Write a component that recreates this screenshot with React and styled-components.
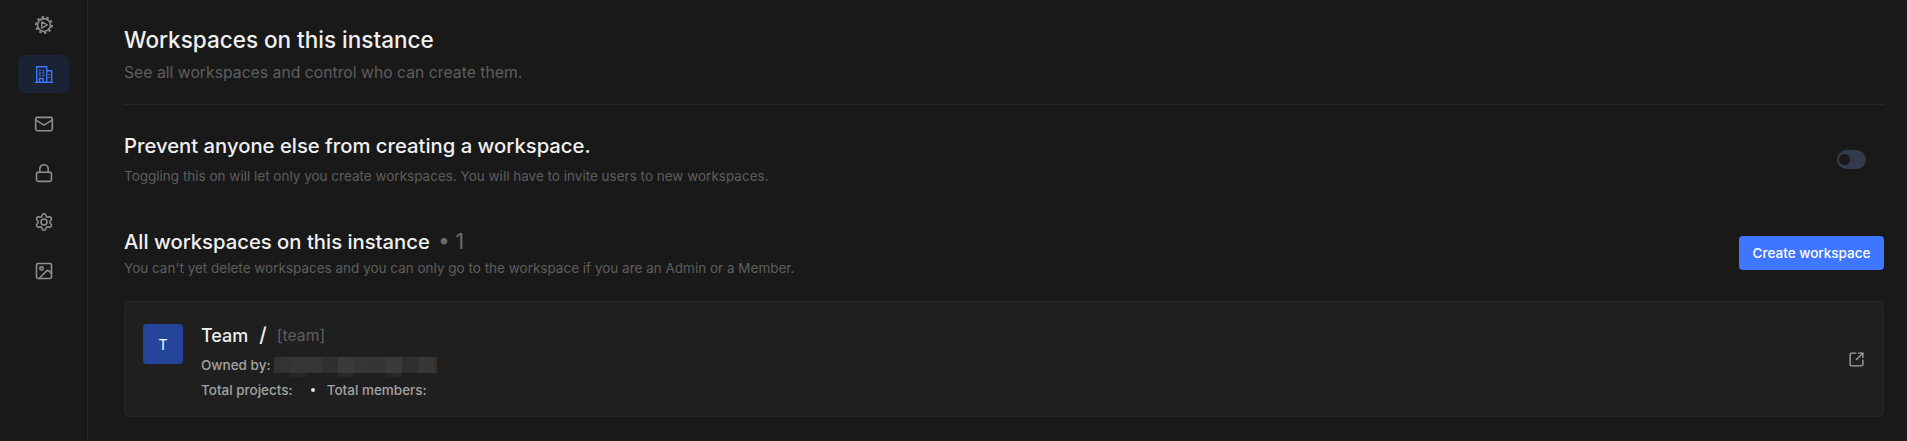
import React from "react";
import styled, { createGlobalStyle } from "styled-components";
import { Mail, Lock, Image as ImageIcon, SquareArrowOutUpRight } from "lucide-react";

const Global = createGlobalStyle`
  html, body { margin: 0; padding: 0; background: #191919; }
  body { font-family: Inter, "Liberation Sans", sans-serif; }
  * { box-sizing: border-box; }
`;

const Page = styled.div`
  display: flex;
  width: 1907px;
  height: 441px;
  overflow: hidden;
  background: #191919;
  color: #f0f0f0;
`;

const Sidebar = styled.nav`
  width: 88px;
  flex: none;
  border-right: 1px solid #262626;
  padding: 6px 18px 0;
  display: flex;
  flex-direction: column;
  gap: 11.25px;
`;

const NavItem = styled.div`
  width: 51px;
  height: 38px;
  border-radius: 6px;
  display: flex;
  align-items: center;
  justify-content: center;
  color: ${(p) => (p.$active ? "#3f76ff" : "#8f8f8f")};
  background: ${(p) => (p.$active ? "#1a2334" : "transparent")};
`;

const Main = styled.main`
  flex: 1;
  padding: 24px 23px 0 36px;
  display: flex;
  flex-direction: column;
`;

const Header = styled.header`
  padding-bottom: 19px;
  border-bottom: 1px solid #262626;
`;

const Title = styled.h1`
  margin: 0;
  font-size: 22.5px;
  line-height: 32px;
  font-weight: 500;
  color: #f0f0f0;
`;

const Subtitle = styled.p`
  margin: 5px 0 0;
  font-size: 15.75px;
  line-height: 24px;
  color: #5e5e5e;
`;

const Row = styled.section`
  display: flex;
  align-items: center;
  justify-content: space-between;
`;

const PreventRow = styled(Row)`
  margin-top: 27px;
`;

const SectionTitle = styled.h2`
  margin: 0;
  font-size: 20.25px;
  line-height: 28px;
  font-weight: 500;
  color: #f0f0f0;
`;

const Description = styled.p`
  margin: ${(p) => p.$gap}px 0 0;
  font-size: 13.5px;
  line-height: 20px;
  color: #5e5e5e;
`;

const Toggle = styled.div`
  width: 29px;
  height: 19px;
  border-radius: 10px;
  background: #323b4c;
  padding: 4px 2px;
  margin-right: 18px;
`;

const Knob = styled.div`
  width: 11px;
  height: 11px;
  border-radius: 50%;
  background: #191919;
`;

const ListRow = styled(Row)`
  margin-top: 42px;
`;

const Count = styled.span`
  margin-left: 8px;
  font-size: 21px;
  color: #6b6b6b;
  font-weight: 400;
`;

const CreateButton = styled.button`
  width: 145px;
  height: 34px;
  border: none;
  border-radius: 4px;
  background: #3f76ff;
  color: #fff;
  font: 500 13.5px Inter, sans-serif;
`;

const Card = styled.article`
  margin-top: 23px;
  height: 116px;
  background: #1f1f1f;
  border: 1px solid #262626;
  border-radius: 6px;
  padding: 22px 18px 0;
  display: flex;
  gap: 18px;
`;

const Avatar = styled.div`
  width: 40px;
  height: 40px;
  border-radius: 4px;
  background: #24459a;
  color: #fff;
  font-size: 14px;
  display: flex;
  align-items: center;
  justify-content: center;
  flex: none;
`;

const CardBody = styled.div`
  flex: 1;
`;

const NameLine = styled.div`
  display: flex;
  align-items: center;
  height: 24px;
  margin-top: -1px;
  color: #f0f0f0;
`;

const Name = styled.span`
  font-size: 18px;
  font-weight: 500;
`;

const Slash = styled.span`
  margin: 0 10px 0 11px;
  font-size: 20px;
  font-weight: 500;
`;

const Slug = styled.span`
  font-size: 15.75px;
  color: #5e5e5e;
`;

const MetaLine = styled.div`
  display: flex;
  align-items: center;
  height: 25px;
  font-size: 13.5px;
  font-weight: 500;
  color: #a3a3a3;
`;

const OwnerLine = styled(MetaLine)`
  margin-top: 5px;
  gap: 4px;
`;

const Dot = styled.span`
  width: 4px;
  height: 4px;
  border-radius: 50%;
  background: #e0e0e0;
  margin: 0 12px 0 18px;
`;

const Redacted = styled.div`
  display: flex;
  height: 16px;
`;

const Pixel = styled.div`
  width: ${(p) => p.$w}px;
  background: ${(p) => p.$c};
  box-shadow: ${(p) => (p.$tail ? "0 4px 0 #272727" : "none")};
`;

const ExternalIcon = styled.div`
  align-self: center;
  color: #a3a3a3;
  display: flex;
  margin-top: -22px;
`;

const GearPlay = () => (
  <svg width="20" height="20" viewBox="0 0 24 24" fill="none" stroke="currentColor" strokeLinejoin="round">
    <circle cx="12" cy="12" r="7.7" strokeWidth="1.9" />
    <circle cx="12" cy="12" r="9.6" strokeWidth="2.2" pathLength="20" strokeDasharray="1 1" />
    <path d="M9.400 8.200 16 12l-6.600 3.800z" strokeWidth="1.7" />
  </svg>
);

const Building = () => (
  <svg width="18" height="17" viewBox="0 0 18 17" fill="none" stroke="currentColor" strokeWidth="1.4">
    <path d="M0 16.300h18" />
    <path d="M1.700 16V.8h10V16" />
    <path d="M11.700 4.700h5V16" />
    <path d="M4 4.500h1.700M7.500 4.500h1.700M4 7h1.700M7.500 7h1.700M4 9.500h1.700M7.500 9.500h1.700M14.200 8v1.300M14.200 11v1.300" />
    <path d="M4.500 16v-3.500h3.500V16" />
  </svg>
);

const GearFlower = () => (
  <svg width="20" height="20" viewBox="0 0 24 24" fill="none" stroke="currentColor" strokeWidth="1.9" strokeLinecap="round" strokeLinejoin="round">
    <path d="M9.671 4.136a2.34 2.34 0 0 1 4.659 0 2.34 2.34 0 0 0 3.319 1.915 2.34 2.34 0 0 1 2.33 4.033 2.34 2.34 0 0 0 0 3.831 2.34 2.34 0 0 1-2.33 4.033 2.34 2.34 0 0 0-3.319 1.915 2.34 2.34 0 0 1-4.659 0 2.34 2.34 0 0 0-3.32-1.915 2.34 2.34 0 0 1-2.33-4.033 2.34 2.34 0 0 0 0-3.831A2.34 2.34 0 0 1 6.350 6.051a2.34 2.34 0 0 0 3.320-1.915" />
    <circle cx="12" cy="12" r="3.600" />
  </svg>
);

const pixels = [
  { c: "#333333", w: 16 },
  { c: "#363636", w: 16, tail: true },
  { c: "#363636", w: 16 },
  { c: "#303030", w: 16 },
  { c: "#3a3a3a", w: 16, tail: true },
  { c: "#363636", w: 16 },
  { c: "#353535", w: 16 },
  { c: "#3a3a3a", w: 16, tail: true },
  { c: "#2f2f2f", w: 16 },
  { c: "#363636", w: 16 },
  { c: "#3a302a", w: 3 },
];

export default function App() {
  return (
    <Page>
      <Global />
      <Sidebar>
        <NavItem><GearPlay /></NavItem>
        <NavItem $active><Building /></NavItem>
        <NavItem><Mail size={20} strokeWidth={1.9} /></NavItem>
        <NavItem><Lock size={20} strokeWidth={1.9} /></NavItem>
        <NavItem><GearFlower /></NavItem>
        <NavItem><ImageIcon size={20} strokeWidth={1.9} /></NavItem>
      </Sidebar>
      <Main>
        <Header>
          <Title>Workspaces on this instance</Title>
          <Subtitle>See all workspaces and control who can create them.</Subtitle>
        </Header>
        <PreventRow>
          <div>
            <SectionTitle>Prevent anyone else from creating a workspace.</SectionTitle>
            <Description $gap={6}>Toggling this on will let only you create workspaces. You will have to invite users to new workspaces.</Description>
          </div>
          <Toggle><Knob /></Toggle>
        </PreventRow>
        <ListRow>
          <div>
            <SectionTitle>All workspaces on this instance<Count>• 1</Count></SectionTitle>
            <Description $gap={2}>You can't yet delete workspaces and you can only go to the workspace if you are an Admin or a Member.</Description>
          </div>
          <CreateButton>Create workspace</CreateButton>
        </ListRow>
        <Card>
          <Avatar>T</Avatar>
          <CardBody>
            <NameLine><Name>Team</Name><Slash>/</Slash><Slug>[team]</Slug></NameLine>
            <OwnerLine>
              Owned by:
              <Redacted>{pixels.map((p, i) => <Pixel key={i} $c={p.c} $w={p.w} $tail={p.tail} />)}</Redacted>
            </OwnerLine>
            <MetaLine>Total projects:<Dot />Total members:</MetaLine>
          </CardBody>
          <ExternalIcon><SquareArrowOutUpRight size={17} strokeWidth={1.9} /></ExternalIcon>
        </Card>
      </Main>
    </Page>
  );
}
